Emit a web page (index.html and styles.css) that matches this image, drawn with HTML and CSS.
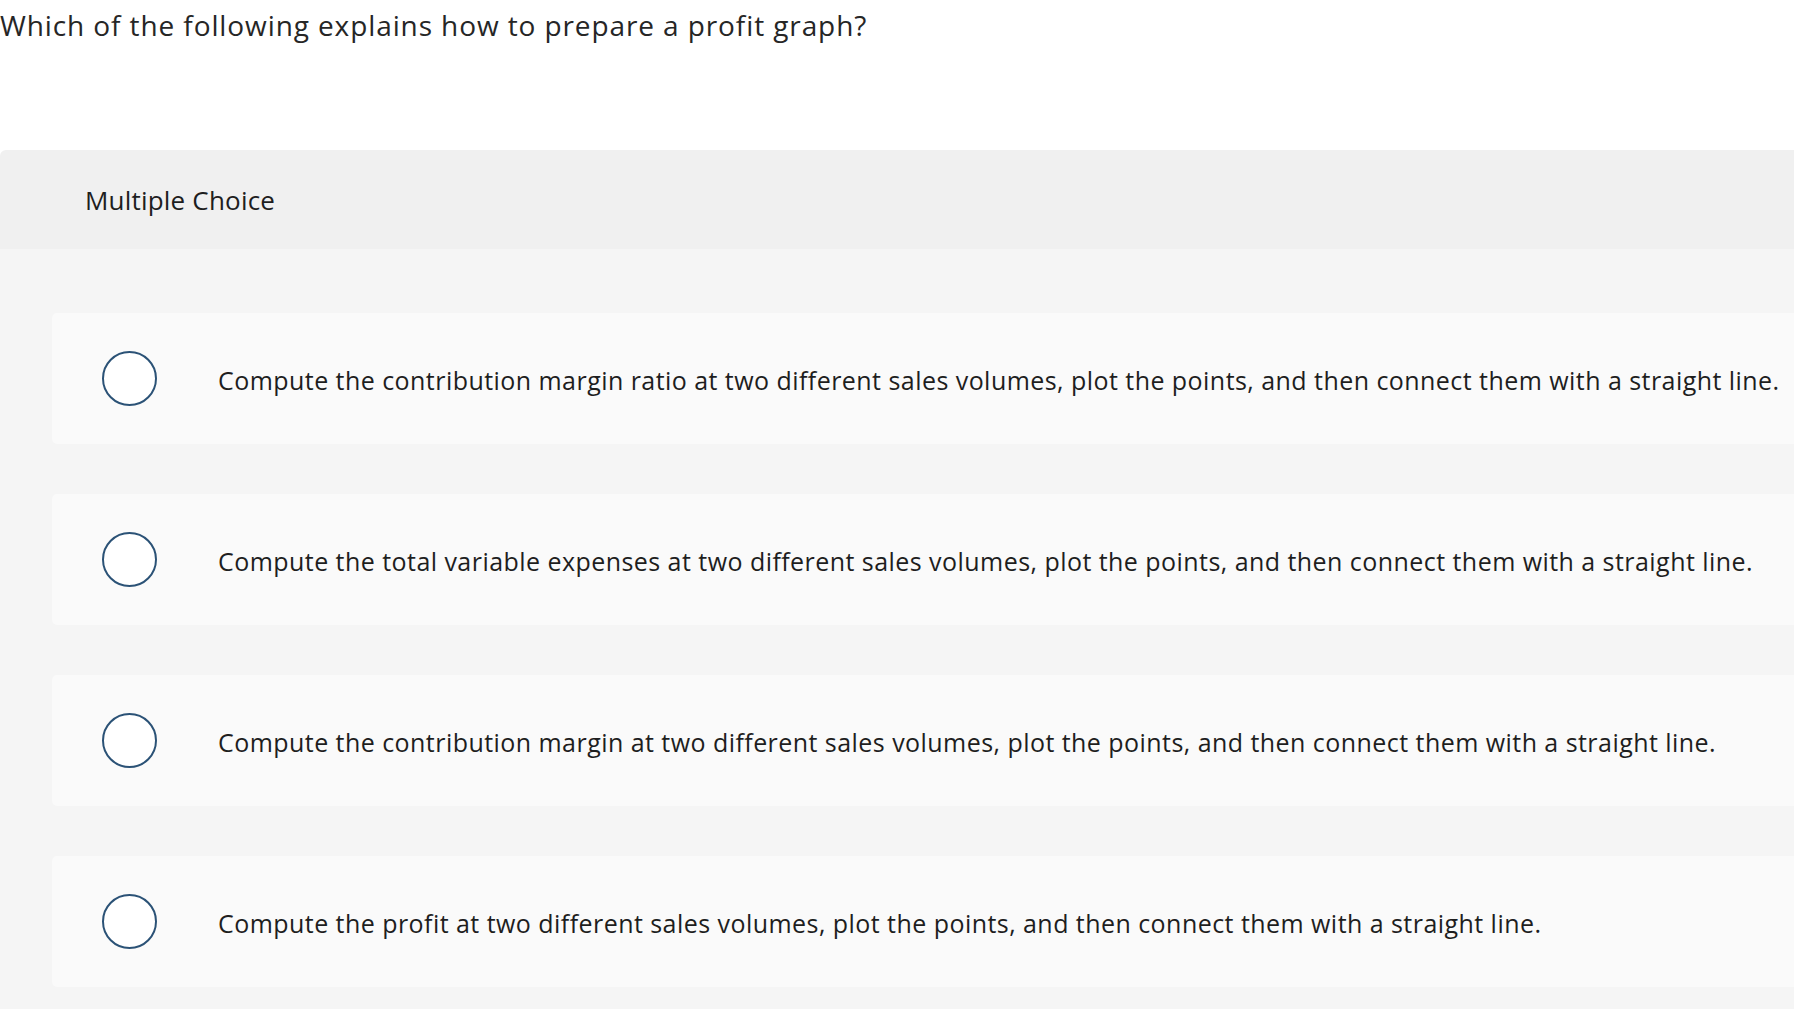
FILE: index.html
```html
<!DOCTYPE html>
<html lang="en">
<head>
<meta charset="utf-8">
<title>Multiple Choice</title>
<link rel="stylesheet" href="styles.css">
</head>
<body>
<div class="question">Which of the following explains how to prepare a profit graph?</div>
<div class="mc">
  <div class="mc-header">Multiple Choice</div>
  <div class="mc-options">
    <label class="option"><span class="radio"></span><span class="option-text">Compute the contribution margin ratio at two different sales volumes, plot the points, and then connect them with a straight line.</span></label>
    <label class="option"><span class="radio"></span><span class="option-text">Compute the total variable expenses at two different sales volumes, plot the points, and then connect them with a straight line.</span></label>
    <label class="option"><span class="radio"></span><span class="option-text">Compute the contribution margin at two different sales volumes, plot the points, and then connect them with a straight line.</span></label>
    <label class="option"><span class="radio"></span><span class="option-text">Compute the profit at two different sales volumes, plot the points, and then connect them with a straight line.</span></label>
  </div>
</div>
</body>
</html>
```
FILE: styles.css
```css
html, body {
  margin: 0;
  padding: 0;
  background: #ffffff;
  font-family: "Open Sans", "Liberation Sans", Arial, sans-serif;
  color: #222222;
  overflow: hidden;
}
.question {
  height: 150px;
  box-sizing: border-box;
  padding-top: 5px;
  font-size: 28px;
  line-height: 40px;
  letter-spacing: 0.9px;
  color: #262626;
}
.mc {
  border-top-left-radius: 6px;
  overflow: hidden;
}
.mc-header {
  height: 99px;
  background: #f0f0f0;
  display: flex;
  align-items: center;
  padding-left: 85px;
  font-size: 26px;
  letter-spacing: 0.2px;
  color: #1e1e1e;
}
.mc-options {
  background: #f5f5f5;
  padding: 64px 0 22px 52px;
  display: flex;
  flex-direction: column;
  gap: 50px;
}
.option {
  height: 131px;
  background: #fafafa;
  border-radius: 5px 0 0 5px;
  display: flex;
  align-items: center;
  padding-left: 50px;
  padding-top: 3px;
  box-sizing: border-box;
}
.radio {
  width: 55px;
  height: 55px;
  box-sizing: border-box;
  border: 2.5px solid #2b5276;
  border-radius: 50%;
  background: #ffffff;
  flex: none;
  margin-top: -3px;
}
.option-text {
  margin-left: 61px;
  font-size: 25px;
  letter-spacing: 0.45px;
  color: #1e1e1e;
  white-space: nowrap;
}
```
